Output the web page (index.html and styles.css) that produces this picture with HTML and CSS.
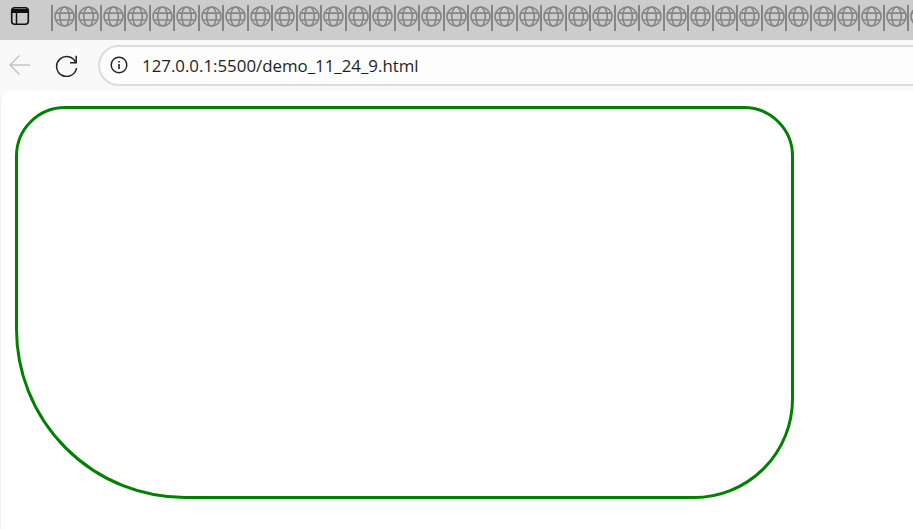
FILE: index.html
```html
<!DOCTYPE html>
<html lang="en">
<head>
    <meta charset="UTF-8">
    <title>demo_11_24_9</title>
    <link rel="stylesheet" href="styles.css">
</head>
<body>
    <svg class="defs" width="0" height="0">
        <symbol id="globe" viewBox="0 0 22 22">
            <g fill="none" stroke="#858585" stroke-width="1.7">
                <circle cx="11" cy="11" r="10"/>
                <ellipse cx="11" cy="11" rx="5" ry="10"/>
                <path d="M2 7.4H20M2 14.6H20"/>
            </g>
        </symbol>
    </svg>

    <!-- tab strip -->
    <div class="tabstrip">
        <svg class="window-icon" width="20" height="20" viewBox="0 0 20 20">
            <rect x="1.7" y="1.7" width="16.6" height="16.6" rx="3" fill="none" stroke="#111" stroke-width="1.6"/>
            <path d="M2 5H18" stroke="#111" stroke-width="4"/>
            <path d="M6.5 6V18" stroke="#111" stroke-width="1.5"/>
        </svg>
        <div class="tabs">
            <div class="tab"><svg><use href="#globe"/></svg></div>
            <div class="tab"><svg><use href="#globe"/></svg></div>
            <div class="tab"><svg><use href="#globe"/></svg></div>
            <div class="tab"><svg><use href="#globe"/></svg></div>
            <div class="tab"><svg><use href="#globe"/></svg></div>
            <div class="tab"><svg><use href="#globe"/></svg></div>
            <div class="tab"><svg><use href="#globe"/></svg></div>
            <div class="tab"><svg><use href="#globe"/></svg></div>
            <div class="tab"><svg><use href="#globe"/></svg></div>
            <div class="tab"><svg><use href="#globe"/></svg></div>
            <div class="tab"><svg><use href="#globe"/></svg></div>
            <div class="tab"><svg><use href="#globe"/></svg></div>
            <div class="tab"><svg><use href="#globe"/></svg></div>
            <div class="tab"><svg><use href="#globe"/></svg></div>
            <div class="tab"><svg><use href="#globe"/></svg></div>
            <div class="tab"><svg><use href="#globe"/></svg></div>
            <div class="tab"><svg><use href="#globe"/></svg></div>
            <div class="tab"><svg><use href="#globe"/></svg></div>
            <div class="tab"><svg><use href="#globe"/></svg></div>
            <div class="tab"><svg><use href="#globe"/></svg></div>
            <div class="tab"><svg><use href="#globe"/></svg></div>
            <div class="tab"><svg><use href="#globe"/></svg></div>
            <div class="tab"><svg><use href="#globe"/></svg></div>
            <div class="tab"><svg><use href="#globe"/></svg></div>
            <div class="tab"><svg><use href="#globe"/></svg></div>
            <div class="tab"><svg><use href="#globe"/></svg></div>
            <div class="tab"><svg><use href="#globe"/></svg></div>
            <div class="tab"><svg><use href="#globe"/></svg></div>
            <div class="tab"><svg><use href="#globe"/></svg></div>
            <div class="tab"><svg><use href="#globe"/></svg></div>
            <div class="tab"><svg><use href="#globe"/></svg></div>
            <div class="tab"><svg><use href="#globe"/></svg></div>
            <div class="tab"><svg><use href="#globe"/></svg></div>
            <div class="tab"><svg><use href="#globe"/></svg></div>
            <div class="tab"><svg><use href="#globe"/></svg></div>
            <div class="tab"><svg><use href="#globe"/></svg></div>
            <div class="tab"><svg><use href="#globe"/></svg></div>
        </div>
    </div>

    <!-- toolbar -->
    <div class="toolbar">
        <svg class="nav-icon back" width="24" height="24" viewBox="0 0 24 24">
            <path d="M22 12H2M11.5 2.5L2 12L11.5 21.5" fill="none" stroke="#c4c4c4" stroke-width="1.5"/>
        </svg>
        <svg class="nav-icon reload" width="24" height="24" viewBox="0 0 24 24">
            <path d="M20.8 9.5A10 10 0 1 0 21.5 15" fill="none" stroke="#222" stroke-width="1.5"/>
            <path d="M15 9.8H21.2V2.8" fill="none" stroke="#222" stroke-width="1.5"/>
        </svg>
        <div class="address">
            <svg class="info-icon" width="18" height="18" viewBox="0 0 18 18">
                <circle cx="9" cy="9" r="7.8" fill="none" stroke="#222" stroke-width="1.4"/>
                <path d="M9 8V13M9 5V6.6" stroke="#222" stroke-width="1.6"/>
            </svg>
            <span class="url">127.0.0.1:5500/demo_11_24_9.html</span>
        </div>
    </div>

    <!-- page content -->
    <div class="page">
        <div class="box"></div>
    </div>
</body>
</html>
```

FILE: styles.css
```css
* {
    margin: 0;
    padding: 0;
    box-sizing: border-box;
}

body {
    display: flex;
    flex-direction: column;
    height: 100vh;
    overflow: hidden;
    background-color: #f9f9f9;
    font-family: "Open Sans", "Liberation Sans", sans-serif;
}

.defs {
    position: absolute;
}

/* tab strip */
.tabstrip {
    display: flex;
    align-items: flex-start;
    height: 40px;
    flex-shrink: 0;
    background-color: #cccccc;
    overflow: hidden;
}

.window-icon {
    flex-shrink: 0;
    margin: 6px 21px 0 10px;
}

.tabs {
    display: flex;
    padding-top: 5px;
}

.tab {
    flex: 0 0 24.47px;
    height: 26px;
    border-left: 2px solid #858585;
    padding: 1px 0 0 1px;
}

.tab svg {
    display: block;
    width: 21px;
    height: 21px;
}

/* toolbar */
.toolbar {
    display: flex;
    align-items: center;
    height: 51px;
    flex-shrink: 0;
    padding: 0 0 1px 8px;
}

.back {
    margin-right: 23px;
}

.reload {
    margin-right: 19px;
}

.address {
    display: flex;
    align-items: center;
    flex: 1;
    height: 41px;
    margin-right: -40px;
    padding-left: 10px;
    background-color: #fdfdfd;
    border: 2px solid #dcdcdc;
    border-radius: 21px;
}

.url {
    margin-left: 14px;
    font-size: 16.85px;
    color: #1f1f1f;
}

/* page content */
.page {
    flex: 1;
    padding: 15px 14px;
    background-color: #ffffff;
    border-left: 1px solid #eeeeee;
    border-top-left-radius: 10px;
}

.box {
    width: 779px;
    height: 393px;
    border: 3px solid green;
    border-radius: 50px 50px 100px 170px;
}
```
